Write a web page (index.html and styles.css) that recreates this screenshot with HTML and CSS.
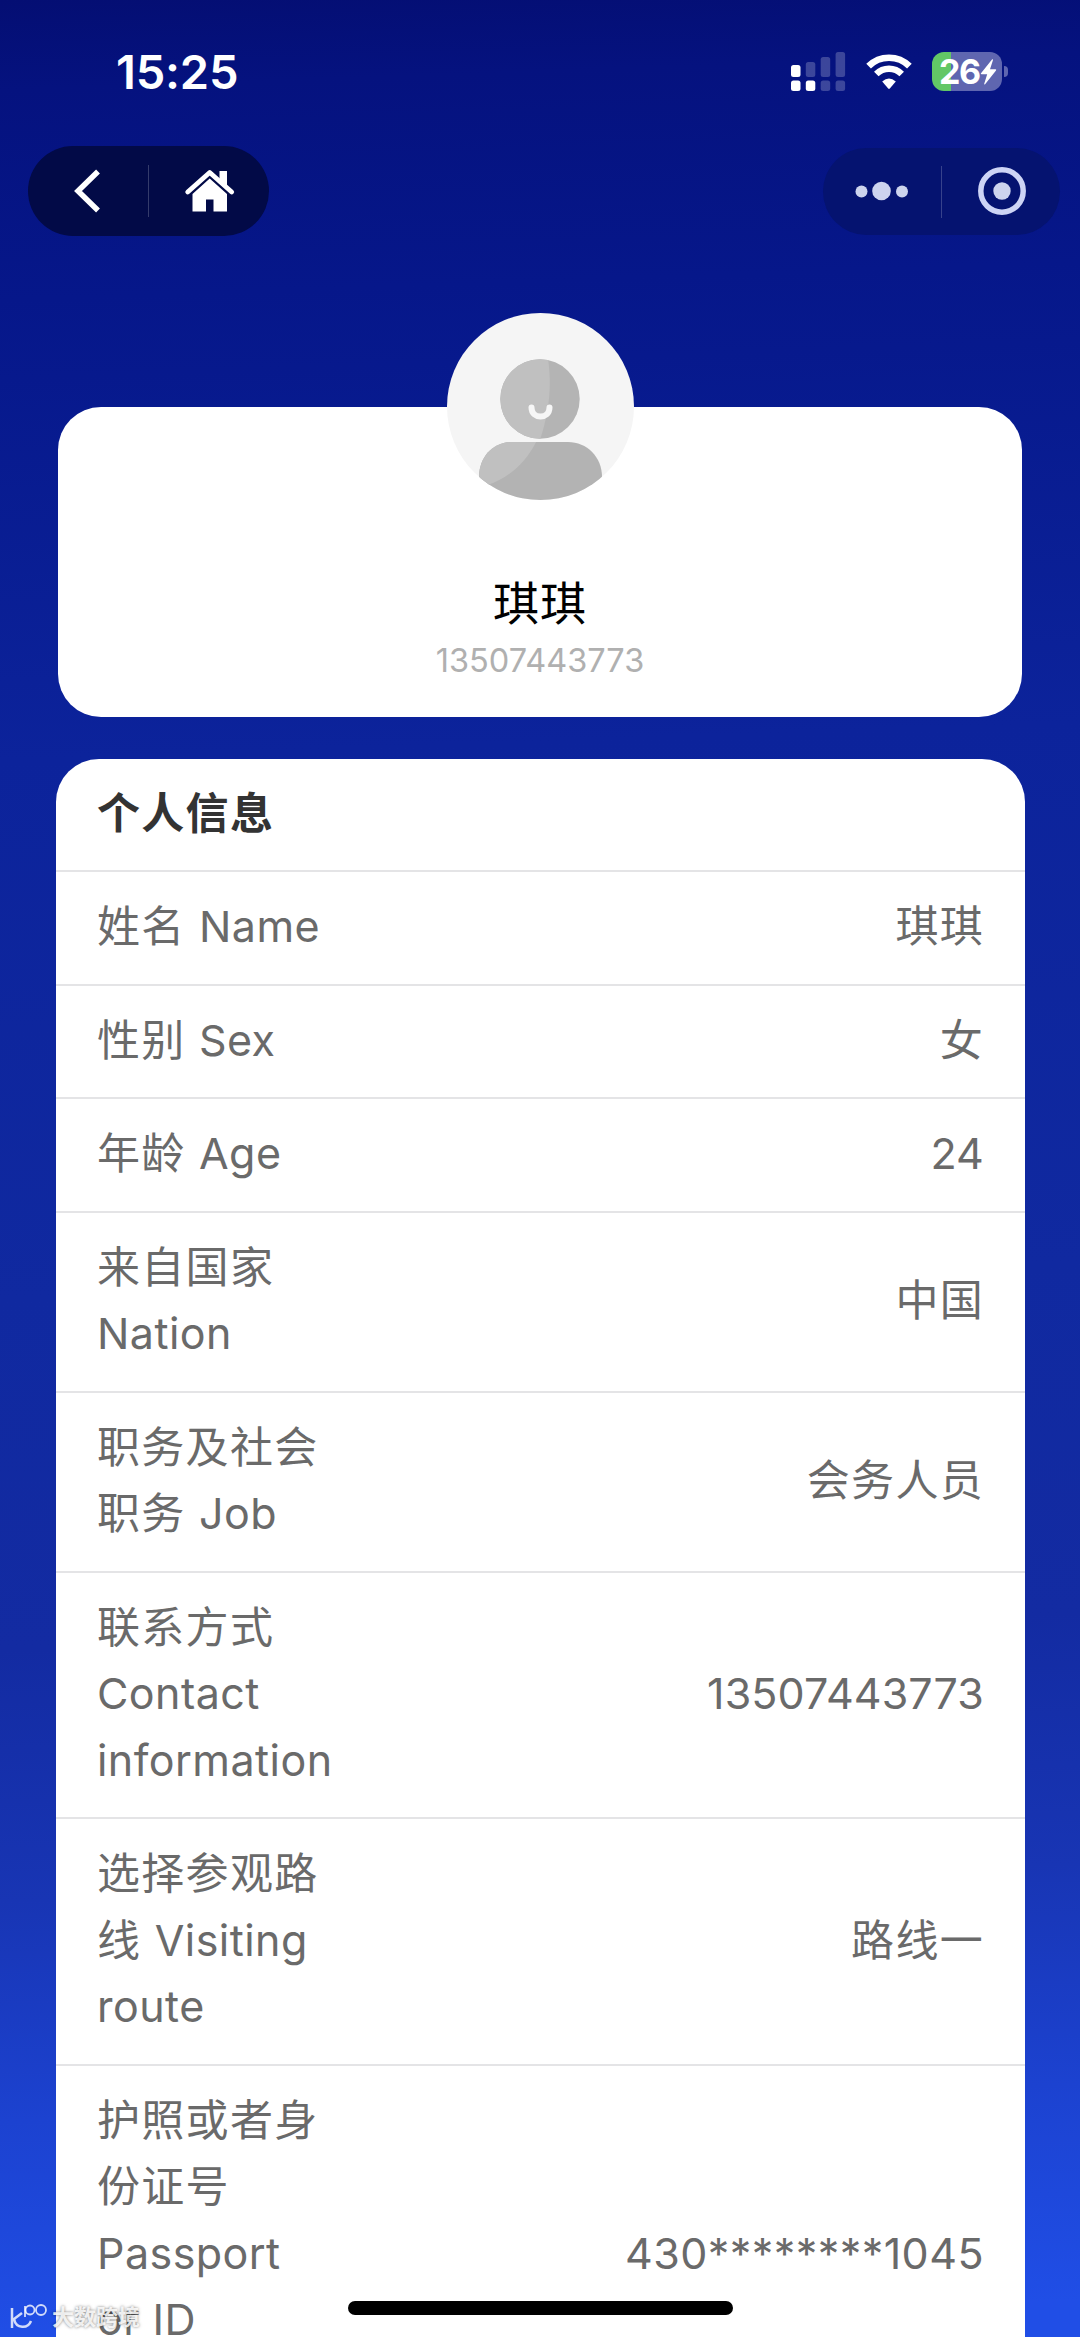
FILE: index.html
```
<!DOCTYPE html>
<html lang="zh-CN">

<head>
  <meta charset="UTF-8">
  <meta name="viewport" content="width=device-width,initial-scale=1.0">
  <meta name="format-detection" content="telephone=no">
  <title>个人信息</title>
  <link rel="stylesheet" href="styles.css">
</head>
<body>
  <div class="page">
    <div class="status-bar">
      <span class="time">15:25</span>
      <div class="status-icons">
        <svg class="signal" width="55" height="39" viewBox="0 0 55 39" fill="#fff">
          <rect x="0" y="13" width="9.5" height="12" rx="2.5" />
          <rect x="0" y="28.500" width="9.5" height="10.500" rx="2.5" />
          <rect x="14.8" y="28.500" width="9.5" height="10.500" rx="2.5" />
          <g opacity=".22">
            <rect x="14.8" y="10" width="9.5" height="15" rx="2.5" />
            <rect x="29.7" y="5" width="9.5" height="20" rx="2.5" />
            <rect x="44.6" y="0" width="9.5" height="25" rx="2.5" />
            <rect x="29.7" y="28.500" width="9.5" height="10.500" rx="2.5" />
            <rect x="44.6" y="28.500" width="9.5" height="10.500" rx="2.5" />
          </g>
        </svg>
        <svg class="wifi" width="46" height="36" viewBox="0 0 46 36">
          <path d="M2.6 12.2a29 29 0 0 1 40.8 0" fill="none" stroke="#fff" stroke-width="6.6" />
          <path d="M10.3 20a18 18 0 0 1 25.4 0" fill="none" stroke="#fff" stroke-width="6.4" />
          <path d="M16.2 27.4Q23 21.6 29.8 27.4L23.8 34.6Q23 35.3 22.2 34.6Z" fill="#fff" />
        </svg>
        <div class="battery">
          <span>26</span>
          <svg width="17" height="26" viewBox="0 0 17 26" fill="#fff">
            <path d="M12.2.3 1 14.2q-.6 1 .6 1.100h5.600L4.200 24.800q-.1 1 .9.500L16 11.400q.6-1-.5-1.200H10L13 .9q0-1-.8-.6z" />
          </svg>
        </div>
      </div>
    </div>

    <div class="nav-bar">
      <div class="nav-pill nav-left">
        <svg width="120" height="90" viewBox="0 0 120 90">
          <path d="M70 25.500 50 45 70 64.500" fill="none" stroke="#fff" stroke-width="5.500" />
        </svg>
        <i class="line"></i>
        <svg width="120" height="90" viewBox="0 0 120 90" fill="#fff">
          <path d="M38.700 46 60.700 26.500 82.700 46" fill="none" stroke="#fff" stroke-width="4.800" stroke-linecap="round" stroke-linejoin="round" />
          <path d="M70.500 25H78v17l-7.500-6.500z" />
          <path d="M60.700 32.500 78 48v17.500H64.500V53.500H57v12H43.500V48z" />
        </svg>
      </div>
      <div class="nav-pill nav-right">
        <svg width="118" height="88" viewBox="0 0 118 88" fill="#cdd4ee">
          <circle cx="38.500" cy="43.500" r="6" />
          <circle cx="58.500" cy="43" r="9.300" />
          <circle cx="79" cy="43.500" r="6" />
        </svg>
        <i class="line"></i>
        <svg width="118" height="88" viewBox="0 0 118 88">
          <circle cx="60" cy="43" r="21.200" fill="none" stroke="#cdd4f5" stroke-width="5.500" />
          <circle cx="60" cy="43" r="8.700" fill="#cdd4ee" />
        </svg>
      </div>
    </div>

    <div class="user-card">
      <svg class="avatar" viewBox="0 0 187 187">
        <defs>
          <clipPath id="round"><circle cx="93.500" cy="93.500" r="93.500" /></clipPath>
          <clipPath id="head"><circle cx="93" cy="86" r="39.700" /></clipPath>
          <clipPath id="bust"><path d="M32 200v-36c0-20 14-35 33-35h56c19 0 34 15 34 35v36z" /></clipPath>
        </defs>
        <g clip-path="url(#round)">
          <rect width="187" height="187" fill="#f5f5f5" />
          <circle cx="93" cy="86" r="39.700" fill="#b4b4b4" />
          <path clip-path="url(#head)" d="M50 40h50c6 32 2 60-8 90H50z" fill="#c0c0c0" />
          <g clip-path="url(#bust)">
            <rect y="125" width="187" height="70" fill="#b3b3b3" />
            <path d="M20 125h71c-10 22-26 38-50 47l-21 3z" fill="#c0c0c0" />
          </g>
          <path d="M84.500 94.500c0 12 18 12 18 0" fill="none" stroke="#f6f6f6" stroke-width="6" stroke-linecap="round" />
        </g>
      </svg>
      <div class="user-name">琪琪</div>
      <div class="user-phone">13507443773</div>
    </div>

    <div class="info-card">
      <div class="row title">个人信息</div>
      <div class="row">
        <div class="label">姓名 <span class="en">Name</span></div>
        <div class="value">琪琪</div>
      </div>
      <div class="row">
        <div class="label">性别 <span class="en">Sex</span></div>
        <div class="value">女</div>
      </div>
      <div class="row">
        <div class="label">年龄 <span class="en">Age</span></div>
        <div class="value num">24</div>
      </div>
      <div class="row">
        <div class="label">来自国家<br><span class="en">Nation</span></div>
        <div class="value">中国</div>
      </div>
      <div class="row">
        <div class="label">职务及社会<br>职务 <span class="en">Job</span></div>
        <div class="value">会务人员</div>
      </div>
      <div class="row">
        <div class="label">联系方式<br><span class="en">Contact<br>information</span></div>
        <div class="value num">13507443773</div>
      </div>
      <div class="row">
        <div class="label">选择参观路<br>线 <span class="en">Visiting<br>route</span></div>
        <div class="value">路线一</div>
      </div>
      <div class="row row-id">
        <div class="label">护照或者身<br>份证号<br><span class="en">Passport<br>or ID</span></div>
        <div class="value num">430********1045</div>
      </div>
    </div>

    <div class="home-indicator"></div>
    <div class="watermark">
      <svg width="38" height="26" viewBox="0 0 38 26" fill="none" stroke="#fff" stroke-opacity=".8" stroke-width="2.500">
        <path d="M2 4v20M12 9 4 15c2 10 14 10 17 2" />
        <path d="M15 13V2" stroke-width="1.800" />
        <circle cx="20" cy="6" r="4.500" stroke-width="1.800" />
        <circle cx="31" cy="6" r="5" stroke-width="1.800" />
      </svg>
      <span>大数跨境</span>
    </div>
  </div>
</body>
</html>
```

FILE: styles.css
```
* {
  box-sizing: border-box;
}

body {
  margin: 0;
  font-family: Inter, "Noto Sans CJK SC", sans-serif;
  color: #6a6a6a;
}

svg {
  display: block;
}

.page {
  position: relative;
  height: 2337px;
  overflow: hidden;
  background: linear-gradient(178deg, #040e73 0, #05127f 90px, #06178a 300px, #0c239b 760px, #1029a0 1300px, #132ba2 1650px, #1835b4 1900px, #1c42d0 2120px, #204ee6 2337px);
}

.status-bar {
  display: flex;
  justify-content: space-between;
  align-items: center;
  height: 146px;
  padding: 0 78px 3px 116px;
}

.time {
  font-size: 47px;
  font-weight: 600;
  letter-spacing: -.2px;
  color: #fff;
}

.status-icons {
  display: flex;
  align-items: center;
}

.wifi {
  margin: 0 20px;
}

.battery {
  position: relative;
  display: flex;
  align-items: center;
  width: 70px;
  height: 39px;
  padding-left: 7px;
  border-radius: 12px;
  color: #fff;
  font-size: 34px;
  font-weight: 700;
  letter-spacing: -1.5px;
  background: linear-gradient(90deg, #62c766 19px, #5f66b0 19px);
}

.battery::after {
  content: "";
  position: absolute;
  left: 72px;
  top: 14px;
  width: 4px;
  height: 11px;
  border-radius: 0 4px 4px 0;
  background: #5f66b0;
}

.nav-bar {
  display: flex;
  justify-content: space-between;
  height: 91px;
  padding: 0 20px 0 28px;
}

.nav-pill {
  display: flex;
  align-items: center;
  border-radius: 45px;
}

.nav-left {
  height: 90px;
  background: #020a47;
}

.nav-right {
  height: 87px;
  margin-top: 2px;
  padding-top: 1px;
  background: #051370;
}

.line {
  width: 1px;
  height: 52px;
  background: rgba(255, 255, 255, .2);
}

.user-card {
  position: relative;
  height: 310px;
  margin: 170px 58px 0;
  padding-top: 165px;
  border-radius: 43px;
  background: #fff;
  text-align: center;
}

.avatar {
  position: absolute;
  left: 389px;
  top: -94px;
  width: 187px;
  height: 187px;
}

.user-name {
  font-size: 46px;
  line-height: 62px;
  letter-spacing: 1px;
  color: #000;
}

.user-phone {
  font-size: 32.5px;
  line-height: 54px;
  color: #b0b0b0;
}

.info-card {
  height: 1700px;
  margin: 41.5px 55px 0 56px;
  border-radius: 43px 43px 0 0;
  background: #fff;
  font-size: 43px;
  line-height: 66.5px;
  letter-spacing: 1.3px;
}

.row {
  display: flex;
  justify-content: space-between;
  align-items: center;
  padding: 21px 41px 24px;
  border-bottom: 2px solid #e4e4e6;
}

.title {
  font-weight: 700;
  color: #333;
}

.label {
  white-space: nowrap;
}

.en {
  letter-spacing: .45px;
}

.num {
  letter-spacing: .1px;
}

/* one line taller than its label, runs past the bottom of the screen */
.row-id {
  height: 379.5px;
}

.row-id .label {
  align-self: flex-start;
}

.row-id .num {
  letter-spacing: .45px;
}

.home-indicator {
  position: absolute;
  left: 348px;
  top: 2301px;
  width: 385px;
  height: 14px;
  border-radius: 7px;
  background: #000;
}

.watermark {
  position: absolute;
  left: 10px;
  top: 2303px;
  display: flex;
  align-items: center;
  gap: 4px;
  color: rgba(255, 255, 255, .85);
  font-size: 22px;
  line-height: 28px;
  font-weight: 700;
  text-shadow: 0 0 3px rgba(0, 0, 0, .5);
}
```
